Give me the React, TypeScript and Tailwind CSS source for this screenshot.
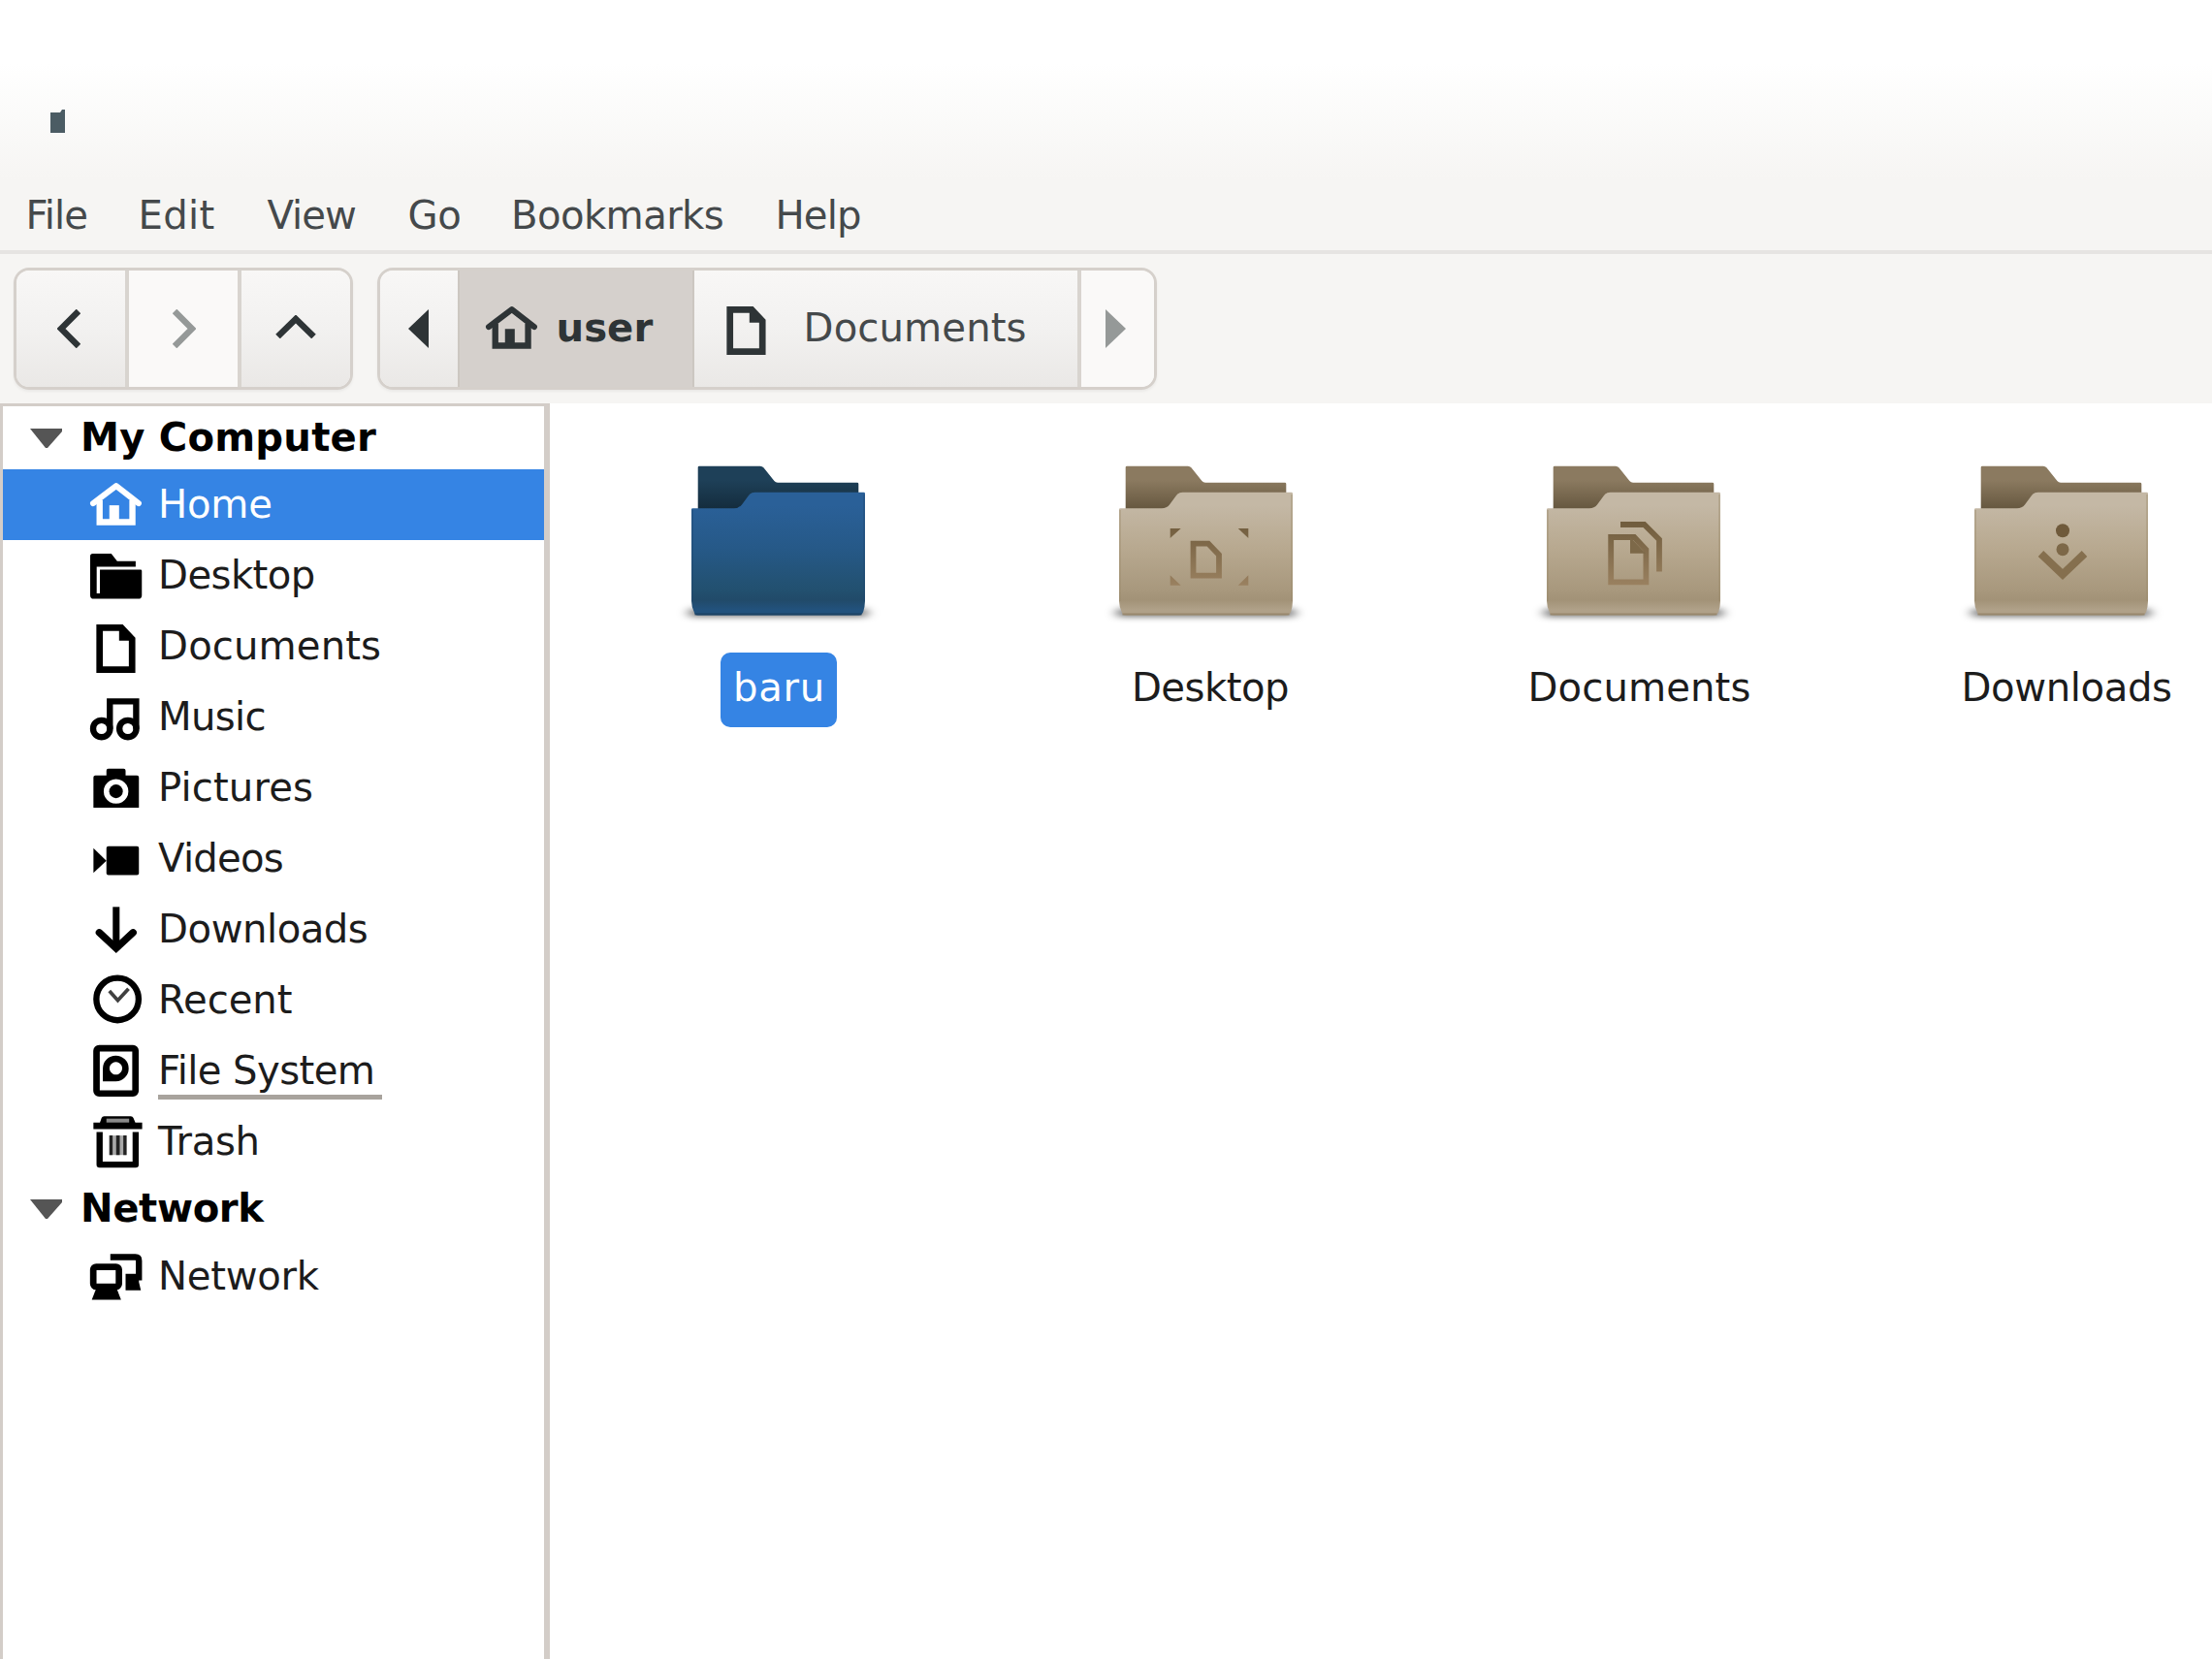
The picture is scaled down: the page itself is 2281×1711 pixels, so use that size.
import React from "react";

type IconProps = { children: React.ReactNode; className?: string };

function Symbolic({ children, className = "" }: IconProps) {
  return (
    <svg
      viewBox="0 0 16 16"
      className={`h-[53.6px] w-[53.6px] shrink-0 overflow-visible ${className}`}
      fill="currentColor"
      stroke="none"
    >
      {children}
    </svg>
  );
}

const line = { fill: "none", stroke: "currentColor", strokeWidth: 1.9 } as const;

const HomeIcon = () => (
  <Symbolic>
    <path d="M.9 7.500 8 2.100l6.900 5.400" {...line} strokeWidth={1.8} strokeLinecap="round" strokeLinejoin="round" />
    <path d="M2.900 6.600v6.700H13V6.600" {...line} />
    <path d="M5.900 8.100h3v5.400h-3z" />
  </Symbolic>
);
const FolderIcon = () => (
  <Symbolic>
    <path d="M.8 1.200h5.700l1.800 2.300H14v1.700H2v8.200h1V6.100h12.500q.400 0 .400.400V14q0 1.100-1.100 1.100H1.100Q0 15.100 0 14V2q0-.8.8-.8z" />
  </Symbolic>
);
const DocumentIcon = () => (
  <Symbolic>
    <path d="M2.900 2.200h6.700l3.300 3.500v9.400h-10z" {...line} strokeWidth={2} />
    <path d="M8.900 2v4.200H13z" />
  </Symbolic>
);
const MusicIcon = () => (
  <Symbolic>
    <path d="M6.050 11.600V3.100h8.100v8.500" {...line} />
    <circle cx="3.500" cy="11.500" r="2.600" {...line} />
    <circle cx="11.600" cy="11.500" r="2.600" {...line} />
  </Symbolic>
);
const CameraIcon = () => (
  <Symbolic>
    <path
      fillRule="evenodd"
      d="M5 4.100V2.600q0-.6.6-.6h4.700q.6 0 .6.6v1.500H14.400q.6 0 .6.6V14H1V4.700q0-.6.6-.6zM7.950 5.200a3.800 3.800 0 1 0 .01 0z"
    />
    <circle cx="7.950" cy="9" r="2.100" />
  </Symbolic>
);
const VideoIcon = () => (
  <Symbolic>
    <rect x="5" y="4.100" width="10" height="8.900" rx=".6" />
    <path d="M1 4.700 5 8.600 1 12.300z" />
  </Symbolic>
);
const DownIcon = () => (
  <Symbolic>
    <path d="M8 1v12" {...line} strokeWidth={2.1} />
    <path d="M2.800 8.900 8 13.700l5.200-4.800" {...line} strokeWidth={2.2} strokeLinecap="round" />
  </Symbolic>
);
const ClockIcon = () => (
  <Symbolic>
    <circle cx="8.400" cy="7.600" r="6.500" {...line} />
    <path d="M5.900 5.100 8.500 8l3.300-3.600" {...line} strokeWidth={1.1} strokeOpacity={0.75} />
  </Symbolic>
);
const DiskIcon = () => (
  <Symbolic>
    <rect x="1.950" y=".950" width="12" height="13.900" rx=".8" {...line} strokeWidth={2} />
    <path
      fillRule="evenodd"
      d="M7.900 3.200a3.950 3.950 0 0 1 0 7.900h-4V7.100a3.950 3.950 0 0 1 4-3.900zm0 1.950a1.950 1.950 0 1 0 .01 0z"
    />
  </Symbolic>
);
const TrashIcon = () => (
  <Symbolic>
    <path d="M1 2h2l.5-1.400q.2-.5.8-.5h8.200q.6 0 .8.5L13.900 2H16v2H1z" />
    <path d="M5 .8h7V2H5z" fill="#8a8a8a" />
    <path d="M2.900 4.900v10.050h11.100V4.900" {...line} strokeLinejoin="round" />
    <path d="M5.900 6h5.300v6H5.900z" fill="#a8a8a8" />
    <path d="M5.900 6h1v6h-1zM8 6h1.100v6H8zM10.200 6h1v6h-1z" fill="#222" />
  </Symbolic>
);
const NetworkIcon = () => (
  <Symbolic>
    <rect x=".950" y="4.950" width="7.900" height="6.100" rx=".9" {...line} strokeWidth={2} />
    <path d="M2 11.200h6l1.500 3.900H.500z" />
    <path d="M6.200 1.950h7.700q1.100 0 1.100 1.100v5.100h-2" {...line} />
    <path d="M10.900 7.100H15v2.500l.6 2.600h-4.700z" />
  </Symbolic>
);

type Place = { name: string; icon: React.ReactNode; tracking: string; underline?: boolean };

const places: Place[] = [
  { name: "Home", icon: <HomeIcon />, tracking: "tracking-[-0.3px]" },
  { name: "Desktop", icon: <FolderIcon />, tracking: "tracking-[-0.6px]" },
  { name: "Documents", icon: <DocumentIcon />, tracking: "tracking-[0.1px]" },
  { name: "Music", icon: <MusicIcon />, tracking: "tracking-[-0.7px]" },
  { name: "Pictures", icon: <CameraIcon />, tracking: "tracking-[0.1px]" },
  { name: "Videos", icon: <VideoIcon />, tracking: "tracking-[-0.8px]" },
  { name: "Downloads", icon: <DownIcon />, tracking: "tracking-[-0.5px]" },
  { name: "Recent", icon: <ClockIcon />, tracking: "tracking-[-0.1px]" },
  { name: "File System", icon: <DiskIcon />, tracking: "tracking-[-0.6px]", underline: true },
  { name: "Trash", icon: <TrashIcon />, tracking: "tracking-[-0.3px]" },
];

function SectionHeader({ title, box }: { title: string; box: string }) {
  return (
    <div className={`flex items-center pl-[28px] text-black ${box}`}>
      <svg viewBox="0 0 33 20" className="h-5 w-[33px] shrink-0" fill="#555">
        <path d="M0 0h33v3L18 20h-2z" />
      </svg>
      <span className="ml-[19px] font-bold">{title}</span>
    </div>
  );
}

function PlaceRow({ place, selected }: { place: Place; selected?: boolean }) {
  return (
    <div
      className={`flex h-[73px] items-center pl-[89.500px] ${
        selected ? "bg-[#3584e4] text-white" : "text-black"
      }`}
    >
      {place.icon}
      <span className={`relative ml-[17px] ${selected ? "" : "text-[#1c1c1c]"} ${place.tracking}`}>
        {place.name}
        {place.underline && (
          <span className="absolute top-[45px] left-[0px] h-[5px] w-[231px] bg-[#a8a39d]" />
        )}
      </span>
    </div>
  );
}

function FolderArt({ blue, id, children }: { blue?: boolean; id: string; children?: React.ReactNode }) {
  const front = blue
    ? ["#2a6098", "#265988", "#22506f", "#214a69", "#22527d"]
    : ["#c4b8a5", "#b8a990", "#a8987d", "#a29277", "#b0a189"];
  const back = blue ? ["#1e4058", "#142c3d"] : ["#8b7a60", "#66573f"];
  return (
    <svg viewBox="0 0 200 180" className="h-[180px] w-[200px] overflow-visible">
      <defs>
        <linearGradient id={`${id}-front`} x1="0" y1="38" x2="0" y2="164" gradientUnits="userSpaceOnUse">
          <stop offset="0.1" stopColor={front[0]} />
          <stop offset="0.45" stopColor={front[1]} />
          <stop offset="0.8" stopColor={front[2]} />
          <stop offset="0.88" stopColor={front[3]} />
          <stop offset="0.96" stopColor={front[4]} />
        </linearGradient>
        <linearGradient id={`${id}-back`} x1="0" y1="25" x2="0" y2="55" gradientUnits="userSpaceOnUse">
          <stop offset="0" stopColor={back[0]} />
          <stop offset="1" stopColor={back[1]} />
        </linearGradient>
        <linearGradient id={`${id}-glyph`} x1="0" y1="70" x2="0" y2="134" gradientUnits="userSpaceOnUse">
          <stop offset="0" stopColor="#715d3e" />
          <stop offset="1" stopColor="#9a8160" />
        </linearGradient>
        <filter id={`${id}-blur`} x="-10%" y="-150%" width="120%" height="400%">
          <feGaussianBlur stdDeviation="6 3" />
        </filter>
      </defs>
      <rect x="7" y="158" width="185" height="8" rx="4" fill="#000" fillOpacity="0.55" filter={`url(#${id}-blur)`} />
      <path
        d="M16.700 58V12q0-1.300 1.300-1.300h63q2 0 3.400 1.600l11 13.600q1.400 1.800 3.600 1.800h82q1.300 0 1.300 1.300V58z"
        fill={`url(#${id}-back)`}
      />
      <path
        d="M10 55.500q0-1.200 1.200-1.200H54q5 0 8-3.800l7-9.500q2.500-3.300 6.500-3.300h112.300q1.200 0 1.200 1.200V150q-.2 6-1.700 10.500-1.300 4-4.500 4H16.500q-3.200 0-3.800-3.500-2.500-5-2.700-11z"
        fill={`url(#${id}-front)`}
      />
      <path d="M13.500 163.500h172" stroke={blue ? "#193c5a" : "#8e7d62"} strokeWidth="2" strokeOpacity="0.7" />
      <path d="M11 56v94M188 40v110" stroke={blue ? "#1f4a72" : "#9c8a6c"} strokeWidth="1.500" strokeOpacity="0.5" />
      {children}
    </svg>
  );
}

function FileItem({
  name,
  children,
  selected,
  labelClass,
}: {
  name: string;
  children: React.ReactNode;
  selected?: boolean;
  labelClass: string;
}) {
  return (
    <div className="flex w-[441px] shrink-0 flex-col items-center">
      {children}
      <div
        className={`mt-[23px] flex h-[77px] items-center pb-[4px] ${
          selected ? "w-[120px] rounded-[10px] bg-[#3584e4] pl-[13.500px] text-white" : "px-[11px] text-[#1c1c1c]"
        } ${labelClass}`}
      >
        {name}
      </div>
    </div>
  );
}

const menus = [
  { name: "File", box: "w-[116px]", tracking: "tracking-[-0.9px]" },
  { name: "Edit", box: "w-[133px]", tracking: "tracking-[0.3px]" },
  { name: "View", box: "w-[145px]", tracking: "tracking-[-1px]" },
  { name: "Go", box: "w-[106.500px]", tracking: "tracking-[-0.5px]" },
  { name: "Bookmarks", box: "w-[272.500px]", tracking: "tracking-[-0.6px]" },
  { name: "Help", box: "w-[100px]", tracking: "tracking-[-0.9px]" },
];

const raised = "bg-linear-to-b from-[#f8f7f6] via-[#f2f1f0] to-[#eae8e6]";

export default function App() {
  return (
    <div className="flex h-[1711px] w-[2281px] flex-col overflow-hidden bg-[#f6f5f3] font-['DejaVu_Sans',sans-serif] text-[40.2px] leading-none whitespace-nowrap">
      <header className="h-[186px] shrink-0 bg-linear-to-b from-white from-35% to-[#f6f5f3] pt-[113px] pl-[52px]">
        <svg viewBox="0 0 15 24" className="h-6 w-[15px]" fill="#4b5c64">
          <path d="M0 3h10l2-3h3v24H0z" />
        </svg>
      </header>

      <nav className="flex h-[76px] shrink-0 items-center border-b-[4px] border-[#e6e4e2] pl-[26.500px] text-[#45494b]">
        {menus.map((m) => (
          <span key={m.name} className={`shrink-0 ${m.box} ${m.tracking}`}>
            {m.name}
          </span>
        ))}
      </nav>

      <div className="flex h-[154px] shrink-0 items-start pt-[14px] pl-[14px] text-[#2e3436]">
        <div className="flex h-[126px] w-[350px] overflow-hidden rounded-[16px] border-[3.400px] border-[#d5d0cb] shadow-[0_2px_3px_rgba(0,0,0,0.05)]">
          <button
            className={`flex w-[115.500px] items-center justify-center border-r-[4px] border-[#d8d4cf] pr-[3px] ${raised}`}
          >
            <svg viewBox="0 0 24 40" className="h-10 w-6" {...line} strokeWidth="6.500">
              <path d="M22 2 4 20l18 18" />
            </svg>
          </button>
          <button className="flex w-[116px] items-center justify-center border-r-[4px] border-[#d8d4cf] bg-[#faf9f8] pl-[3px] text-[#959998]">
            <svg viewBox="0 0 24 40" className="h-10 w-6" {...line} strokeWidth="6.500">
              <path d="M2 2 20 20 2 38" />
            </svg>
          </button>
          <button className={`flex flex-1 items-center justify-center ${raised}`}>
            <svg viewBox="0 0 42 24" className="mt-[-5px] h-6 w-[42px]" {...line} strokeWidth="6.500">
              <path d="M2.500 22 21 4l18.500 18" />
            </svg>
          </button>
        </div>

        <div className="ml-[25px] flex h-[126px] w-[804px] overflow-hidden rounded-[16px] border-[3.400px] border-[#d5d0cb] shadow-[0_2px_3px_rgba(0,0,0,0.05)]">
          <button className={`flex w-[79.500px] items-center justify-center ${raised}`}>
            <svg viewBox="0 0 21 40" className="h-10 w-[21px]" fill="currentColor">
              <path d="M21 0v40L0 20z" />
            </svg>
          </button>
          <button className="flex w-[244.500px] items-center border-x-2 border-[#ccc7c1] bg-[#d5d0cc] pl-[27px]">
            <HomeIcon />
            <span className="ml-[19.500px] pb-[2px] font-bold">user</span>
          </button>
          <button className={`flex w-[398.500px] items-center border-r-[4px] border-[#d8d4cf] pl-[26.500px] ${raised}`}>
            <DocumentIcon />
            <span className="ml-[32.500px] pb-[2px] tracking-[0.100px] text-[#45494b]">Documents</span>
          </button>
          <button className="flex flex-1 items-center justify-center bg-[#faf9f8] pr-[4px] text-[#959998]">
            <svg viewBox="0 0 21 40" className="h-10 w-[21px]" fill="currentColor">
              <path d="M0 0v40l21-20z" />
            </svg>
          </button>
        </div>
      </div>

      <main className="flex flex-1 bg-white">
        <aside className="w-[567px] shrink-0 border-t-[3px] border-r-[6px] border-l-[3px] border-[#d3cdc8] bg-white">
          <SectionHeader title="My Computer" box="h-[65px] tracking-[0.2px]" />
          {places.map((p, i) => (
            <PlaceRow key={p.name} place={p} selected={i === 0} />
          ))}
          <SectionHeader title="Network" box="h-[66px] pb-[1px] tracking-[-0.4px]" />
          <PlaceRow place={{ name: "Network", icon: <NetworkIcon />, tracking: "tracking-[-0.3px]" }} />
        </aside>

        <section className="flex flex-1 items-start overflow-hidden pt-[54px] pl-[15px]">
          <FileItem name="baru" selected labelClass="tracking-[0.700px]">
            <FolderArt id="baru" blue />
          </FileItem>
          <FileItem name="Desktop" labelClass="ml-[9px] tracking-[-0.5px]">
            <FolderArt id="desktop">
              <g fill="url(#desktop-glyph)">
                <path d="M62.700 75h11l-11 10zM143.300 75h-10.600l10.600 10zM62.700 133.700h11l-11-10.400zM143.300 133.700h-10.600l10.600-10.400z" />
                <path
                  d="M86.500 90.700h15.500l11 11.500v21.500H86.500z"
                  fill="none"
                  stroke="url(#desktop-glyph)"
                  strokeWidth="5.800"
                />
              </g>
            </FolderArt>
          </FileItem>
          <FileItem name="Documents" labelClass="ml-[12px] tracking-[0.1px]">
            <FolderArt id="documents">
              <g fill="none" stroke="url(#documents-glyph)" strokeWidth="5.800">
                <path d="M76.200 84h24l12.200 13v33.400H76.200z" />
                <path d="M86 71h24.500L126 86.500V119.500" />
              </g>
              <path d="M96 84v16.700h16z" fill="#7d6949" />
            </FolderArt>
          </FileItem>
          <FileItem name="Downloads" labelClass="ml-[11px] tracking-[-0.4px]">
            <FolderArt id="downloads">
              <circle cx="101" cy="77.300" r="7" fill="#6f5a3b" />
              <circle cx="101" cy="96.700" r="6.500" fill="#7d6848" />
              <path d="M78.500 101 101 122.500 123.500 101" fill="none" stroke="#856f4e" strokeWidth="8" />
            </FolderArt>
          </FileItem>
        </section>
      </main>
    </div>
  );
}
